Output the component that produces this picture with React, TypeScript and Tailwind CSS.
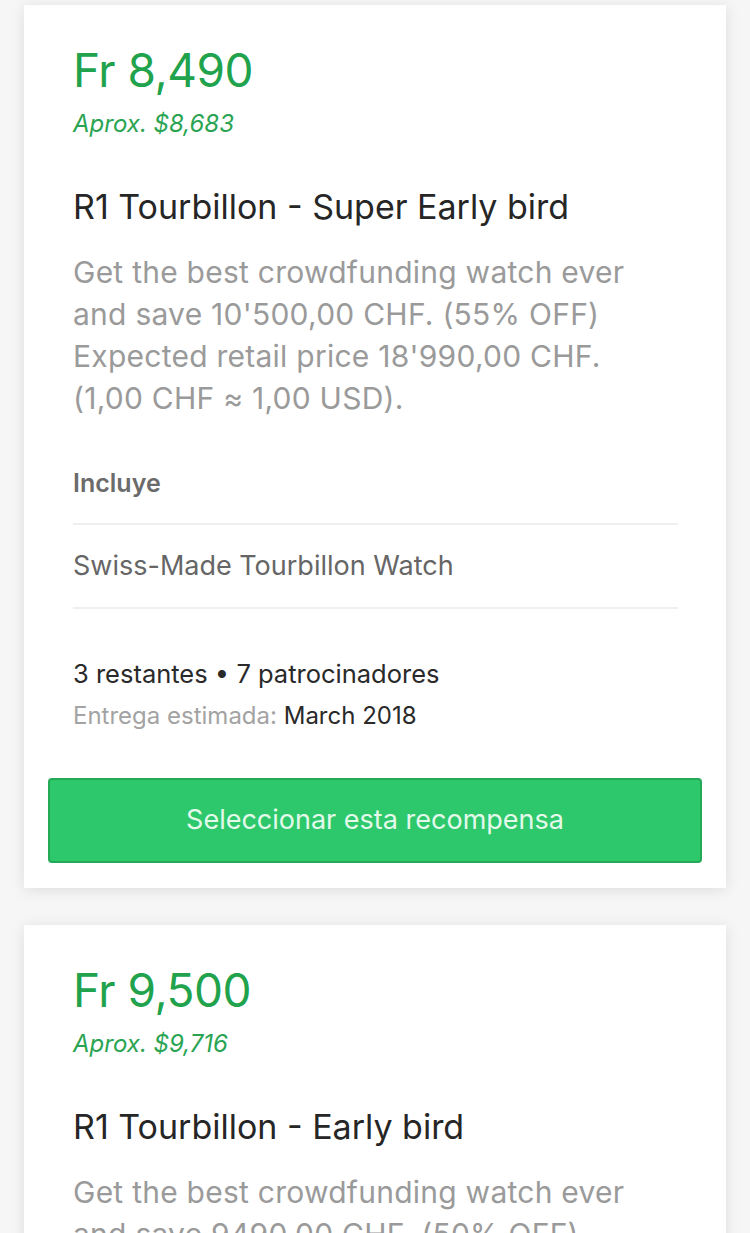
const rewards = [
  {
    price: 'Fr 8,490',
    approx: 'Aprox. $8,683',
    title: 'R1 Tourbillon - Super Early bird',
    desc: [
      'Get the best crowdfunding watch ever',
      "and save 10'500,00 CHF. (55% OFF)",
      "Expected retail price 18'990,00 CHF.",
      '(1,00 CHF ≈ 1,00 USD).',
    ],
  },
  {
    price: 'Fr 9,500',
    approx: 'Aprox. $9,716',
    title: 'R1 Tourbillon - Early bird',
    desc: [
      'Get the best crowdfunding watch ever',
      'and save 9490,00 CHF. (50% OFF)',
      "Expected retail price 18'990,00 CHF.",
      '(1,00 CHF ≈ 1,00 USD).',
    ],
  },
]

function RewardCard({ reward }: { reward: (typeof rewards)[number] }) {
  return (
    <div className="bg-white mx-6 shadow-[0_2px_14px_rgba(0,0,0,0.10)] px-6 pt-[35px] pb-[25px]">
      <div className="pl-[25px] pr-6">
        <div className="text-[46px] leading-[60px] text-[#21a24c] tracking-[-0.5px]">{reward.price}</div>
        <div className="text-[24px] italic leading-[30px] mt-[9px] text-[#2aa452]">{reward.approx}</div>
        <h2 className="text-[34px] leading-[44px] text-[#262626] mt-[46px]">{reward.title}</h2>
        <p className="text-[30px] leading-[42px] text-[#9a9a9a] mt-[22px] tracking-[0.25px]">
          {reward.desc.map((line) => (
            <span key={line} className="block">{line}</span>
          ))}
        </p>
        <div className="text-[25px] font-semibold text-[#6b6b6b] mt-[48px] leading-[32px]">Incluye</div>
        <div className="border-t-2 border-[#efefef] mt-[24px]" />
        <div className="text-[27px] text-[#666] leading-[36px] py-[23px]">Swiss-Made Tourbillon Watch</div>
        <div className="border-t-2 border-[#efefef]" />
        <div className="text-[25.5px] text-[#2a2a2a] mt-[48px] leading-[34px]">3 restantes • 7 patrocinadores</div>
        <div className="text-[24px] leading-[30px] mt-[10px]">
          <span className="text-[#a3a3a3]">Entrega estimada: </span>
          <span className="text-[#2a2a2a]">March 2018</span>
        </div>
      </div>
      <button className="w-full mt-[47px] h-[85px] rounded-[4px] bg-[#2dc86c] border-2 border-[#24a957] text-[#e3f9ea] text-[27px]">
        Seleccionar esta recompensa
      </button>
    </div>
  )
}

export default function App() {
  return (
    <div
      className="h-[1233px] bg-[#f6f6f6] pt-[5px] flex flex-col gap-[37px] overflow-hidden"
      style={{ fontFamily: 'Inter, "Noto Sans", sans-serif' }}
    >
      {rewards.map((r) => (
        <RewardCard key={r.price} reward={r} />
      ))}
    </div>
  )
}
